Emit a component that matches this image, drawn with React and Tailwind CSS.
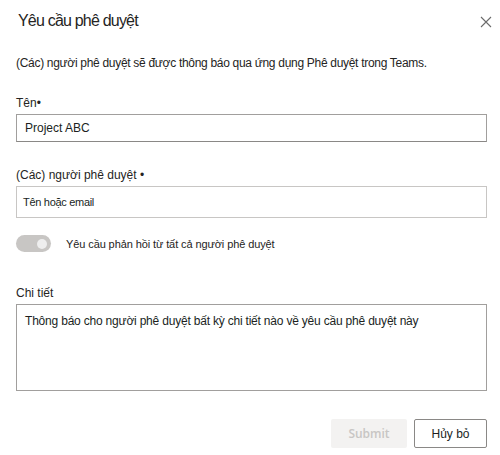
export default function App() {
  return (
    <div className="w-[500px] h-[455px] bg-white text-[#252423] font-['Liberation_Sans',Arial,sans-serif] relative">
      {/* Header */}
      <div className="flex items-start justify-between pl-[18px] pr-[5px] pt-[10px]">
        <h1 className="text-[16px] leading-[22px] tracking-[-0.8px] text-[#252423]">Yêu cầu phê duyệt</h1>
        <button className="mt-[3px] text-[#605e5c]" aria-label="Đóng">
          <svg width="18" height="18" viewBox="0 0 18 18" fill="none" stroke="#6b6b6b" strokeWidth="1.1">
            <path d="M4 4 L14 14 M14 4 L4 14" />
          </svg>
        </button>
      </div>

      <div className="pl-4 pr-[13px]">
        <p className="mt-[23px] text-[12px] leading-[16px] tracking-[-0.3px]">
          (Các) người phê duyệt sẽ được thông báo qua ứng dụng Phê duyệt trong Teams.
        </p>

        {/* Name */}
        <label className="block mt-[24px] text-[12px] leading-[16px]">Tên•</label>
        <div className="mt-[3px] h-[28px] border border-[#a19f9d] border-b-[#8a8886] flex items-center px-[8px] text-[12px] text-[#201f1e]">
          Project ABC
        </div>

        {/* Approvers */}
        <label className="block mt-[25px] text-[12px] leading-[16px]">(Các) người phê duyệt •</label>
        <div className="mt-[3px] h-[32px] border border-[#c8c6c4] flex items-center px-[6px] text-[11px] tracking-[-0.3px] text-[#201f1e]">
          Tên hoặc email
        </div>

        {/* Toggle */}
        <div className="mt-[17px] flex items-center">
          <div className="w-[35px] h-[17px] rounded-full bg-[#c8c6c4] flex items-center justify-end pr-[4px]">
            <div className="w-[10px] h-[10px] rounded-full bg-[#eeeeee]" />
          </div>
          <span className="ml-[15px] text-[11px] leading-[16px] tracking-[-0.1px]">Yêu cầu phản hồi từ tất cả người phê duyệt</span>
        </div>

        {/* Details */}
        <label className="block mt-[33px] text-[12px] leading-[16px]">Chi tiết</label>
        <div className="mt-[3px] h-[87px] border border-[#a19f9d] px-[8px] pt-[8px] text-[12px] leading-[16px] tracking-[-0.2px] text-[#201f1e]">
          Thông báo cho người phê duyệt bất kỳ chi tiết nào về yêu cầu phê duyệt này
        </div>

        {/* Footer */}
        <div className="mt-[28px] flex justify-end gap-[7px]">
          <button className="w-[76px] h-[29px] rounded-[2px] bg-[#f3f2f1] text-[#c8c6c4] text-[12px] font-semibold font-['Open_Sans',sans-serif]">
            Submit
          </button>
          <button className="w-[73px] h-[29px] rounded-[2px] border border-[#8a8886] bg-white text-[#201f1e] text-[12px]">
            Hủy bỏ
          </button>
        </div>
      </div>
    </div>
  )
}
